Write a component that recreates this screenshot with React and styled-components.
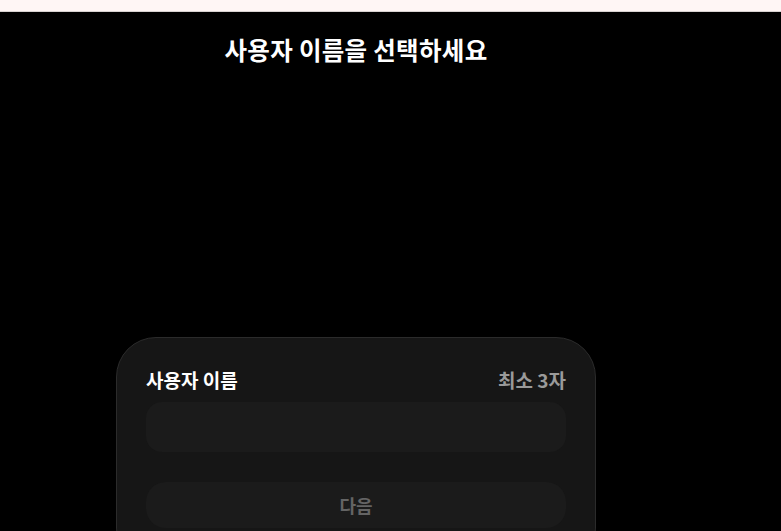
import React, { useState } from 'react';
import styled, { createGlobalStyle } from 'styled-components';

const GlobalStyle = createGlobalStyle`
    html, body {
        margin: 0;
        padding: 0;
        background: #000000;
    }
    body {
        font-family: "Noto Sans CJK KR", "Noto Sans", sans-serif;
    }
`;

const Page = styled.div`
    height: 531px;
    overflow: hidden;
    background: #000000;
`;

const TopStrip = styled.div`
    height: 11px;
    background: #fff6f5;
    border-bottom: 1px solid #d8d2d1;
`;

const Main = styled.main`
    width: 712px;
    display: flex;
    flex-direction: column;
    align-items: center;
`;

const Title = styled.h1`
    margin: 0;
    padding-top: 22px;
    height: 32px;
    line-height: 32px;
    font-size: 24.5px;
    font-weight: 700;
    color: #ffffff;
    letter-spacing: 0.3px;
`;

const Card = styled.section`
    margin-top: 271px;
    width: 420px;
    padding: 29px 29px 0;
    height: 200px;
    background: #161616;
    border: 1px solid #2b2b2b;
    border-radius: 40px;
    display: flex;
    flex-direction: column;
`;

const LabelRow = styled.div`
    display: flex;
    justify-content: space-between;
    align-items: center;
    height: 24px;
    font-size: 19px;
    font-weight: 700;
`;

const Label = styled.label`
    color: ${(p) => (p.muted ? '#9a9a9a' : '#ffffff')};
`;

const Input = styled.input`
    margin-top: 11px;
    height: 50px;
    border: none;
    outline: none;
    border-radius: 16px;
    background: #1b1b1b;
    padding: 0 18px;
    color: #ffffff;
    font-family: inherit;
    font-size: 16px;
`;

const NextButton = styled.button`
    margin-top: 30px;
    height: 46px;
    border: none;
    border-radius: 20px;
    background: #1b1b1b;
    color: #646464;
    font-family: inherit;
    font-size: 18px;
    font-weight: 700;
    cursor: not-allowed;
`;

const App = () => {
    const [name, setName] = useState('');

    return (
        <>
            <GlobalStyle />
            <Page>
                <TopStrip />
                <Main>
                    <Title>사용자 이름을 선택하세요</Title>
                    <Card>
                        <LabelRow>
                            <Label htmlFor="username">사용자 이름</Label>
                            <Label muted>최소 3자</Label>
                        </LabelRow>
                        <Input
                            id="username"
                            value={name}
                            onChange={(e) => setName(e.target.value)}
                        />
                        <NextButton disabled={name.length < 3}>다음</NextButton>
                    </Card>
                </Main>
            </Page>
        </>
    );
};

export default App;
